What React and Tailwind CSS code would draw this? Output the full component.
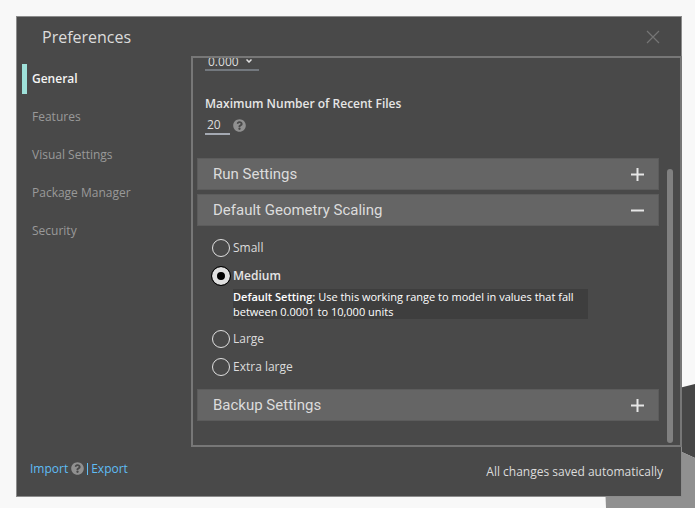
import { useState } from 'react'
import { FaQuestionCircle } from 'react-icons/fa'

const tabs = ['General', 'Features', 'Visual Settings', 'Package Manager', 'Security']

const scales = [
    { id: 'small', label: 'Small' },
    {
        id: 'medium',
        label: 'Medium',
        title: 'Default Setting:',
        text: 'Use this working range to model in values that fall between 0.0001 to 10,000 units',
    },
    { id: 'large', label: 'Large' },
    { id: 'extra', label: 'Extra large' },
]

const Help = ({ label }) => (
    <button type="button" aria-label={label} className="shrink-0 text-[#909090]">
        <FaQuestionCircle className="size-[13px]" />
    </button>
)

const SectionHeader = ({ title, open, onClick }) => (
    <button
        type="button"
        aria-expanded={open}
        onClick={onClick}
        className="flex h-8 w-full shrink-0 items-center justify-between border border-[#5c5c5c] bg-[#656565] pr-3.5 pl-[15px] text-left font-[Roboto,sans-serif] text-[15px] leading-5 text-[#dcdcdc]"
    >
        {title}
        <svg viewBox="0 0 13 13" className="size-[13px]" stroke="#e6e6e6" strokeWidth="2">
            <path d="M0 6.5h13" />
            {!open && <path d="M6.5 0v13" />}
        </svg>
    </button>
)

const Backdrop = () => (
    <svg viewBox="0 0 90 124" className="absolute right-0 bottom-0 h-[124px] w-[90px]">
        <path d="M70 5L90 0V74L70 65Z" fill="#464646" />
        <path d="M0 100L77 68L90 74V124H1Z" fill="#909090" />
    </svg>
)

const App = () => {
    const [tab, setTab] = useState('General')
    const [scale, setScale] = useState('medium')
    const [open, setOpen] = useState('scaling')
    const toggle = (id) => setOpen(open === id ? '' : id)

    return (
        <div className="relative flex min-h-screen flex-col bg-[#f8f8f8] pt-4 pr-[13px] pb-[11px] pl-4 font-['Open_Sans',sans-serif] text-xs text-[#dcdcdc]">
            <Backdrop />
            <div className="relative flex flex-1 flex-col border border-[#8c8c8c] bg-[#494949]">
                <header className="flex h-[39px] items-center justify-between pr-[21px] pl-[25px]">
                    <h1 className="text-base">Preferences</h1>
                    <button type="button" aria-label="Close">
                        <svg viewBox="0 0 14 14" className="size-[14px]" stroke="#757575" strokeWidth="1.2">
                            <path d="M1 1l12 12M13 1L1 13" />
                        </svg>
                    </button>
                </header>

                <div className="-mr-px flex flex-1">
                    <nav className="flex w-[174px] shrink-0 flex-col gap-2 pt-2 pl-[5px]">
                        {tabs.map((name) => (
                            <button
                                key={name}
                                type="button"
                                onClick={() => setTab(name)}
                                className={
                                    name === tab
                                        ? 'h-[30px] border-l-[5px] border-[#9fe1da] pl-[5px] text-left font-semibold text-[#f4f4f4]'
                                        : 'h-[30px] border-l-[5px] border-transparent pl-[5px] text-left text-[#999999]'
                                }
                            >
                                {name}
                            </button>
                        ))}
                    </nav>

                    <main className="flex h-[391px] min-w-0 flex-1 gap-2 border-2 border-[#777777] pr-[7px] pl-1">
                        <div className="flex min-w-0 flex-1 flex-col justify-end overflow-hidden pb-6">
                            <div className="flex flex-col items-start pl-2">
                                <select
                                    aria-label="Number Format"
                                    className="h-4 w-[54px] appearance-none border-b-2 border-[#73787e] pl-[3px] leading-[14px]"
                                    defaultValue="0.000"
                                >
                                    <option>0.000</option>
                                    <option>0.00</option>
                                </select>
                                <svg viewBox="0 0 6 4" className="pointer-events-none -mt-3 mb-2 ml-[41px] h-1 w-1.5" fill="none" stroke="#e0e0e0" strokeWidth="1.5">
                                    <path d="M0.5 0.5L3 3L5.5 0.5" />
                                </svg>
                                <label htmlFor="recent" className="mt-[25px] leading-4 font-semibold text-[#e6e6e6]">
                                    Maximum Number of Recent Files
                                </label>
                                <div className="mt-[3px] mb-[23px] flex items-center gap-[3px]">
                                    <input
                                        id="recent"
                                        defaultValue="20"
                                        className="h-5 w-[25px] border-b-2 border-[#a4a9b2] pl-0.5 leading-4 outline-none"
                                    />
                                    <Help label="About recent files" />
                                </div>
                            </div>

                            <div className="flex flex-col gap-1">
                                <SectionHeader title="Run Settings" open={open === 'run'} onClick={() => toggle('run')} />
                                <SectionHeader
                                    title="Default Geometry Scaling"
                                    open={open === 'scaling'}
                                    onClick={() => toggle('scaling')}
                                />
                            </div>
                            {open === 'scaling' && (
                                <div className="flex flex-col gap-2 py-3 pl-[15px]">
                                    {scales.map((item) => (
                                        <div key={item.id}>
                                            <label
                                                className={
                                                    item.id === scale
                                                        ? 'flex h-5 items-center gap-[3px] font-semibold text-[#e6e6e6]'
                                                        : 'flex h-5 items-center gap-[3px]'
                                                }
                                            >
                                                <input
                                                    type="radio"
                                                    name="scale"
                                                    checked={item.id === scale}
                                                    onChange={() => setScale(item.id)}
                                                    className="size-[18px] appearance-none rounded-full border border-[#e0e0e0] checked:border-[5px] checked:bg-black checked:outline-1 checked:outline-black"
                                                />
                                                {item.label}
                                            </label>
                                            {item.text && (
                                                <p className="mt-[3px] mr-[71px] mb-0.5 ml-[21px] bg-[#3e3e3e] text-[11px] leading-[15px] text-white">
                                                    <b className="font-semibold">{item.title}</b> {item.text}
                                                </p>
                                            )}
                                        </div>
                                    ))}
                                </div>
                            )}
                            <SectionHeader title="Backup Settings" open={open === 'backup'} onClick={() => toggle('backup')} />
                        </div>
                        <div className="mt-[111px] mb-0.5 w-1.5 rounded-full bg-[#808080]"></div>
                    </main>
                </div>

                <footer className="flex h-[49px] items-center justify-between pr-[18px] pl-[13px]">
                    <div className="flex items-center gap-[3px] pb-1.5 text-[#5fbdf5]">
                        <a href="#import">Import</a>
                        <Help label="About import" />
                        <span className="h-3 w-px bg-[#5fbdf5]"></span>
                        <a href="#export">Export</a>
                    </div>
                    <p>All changes saved automatically</p>
                </footer>
            </div>
        </div>
    )
}

export default App
